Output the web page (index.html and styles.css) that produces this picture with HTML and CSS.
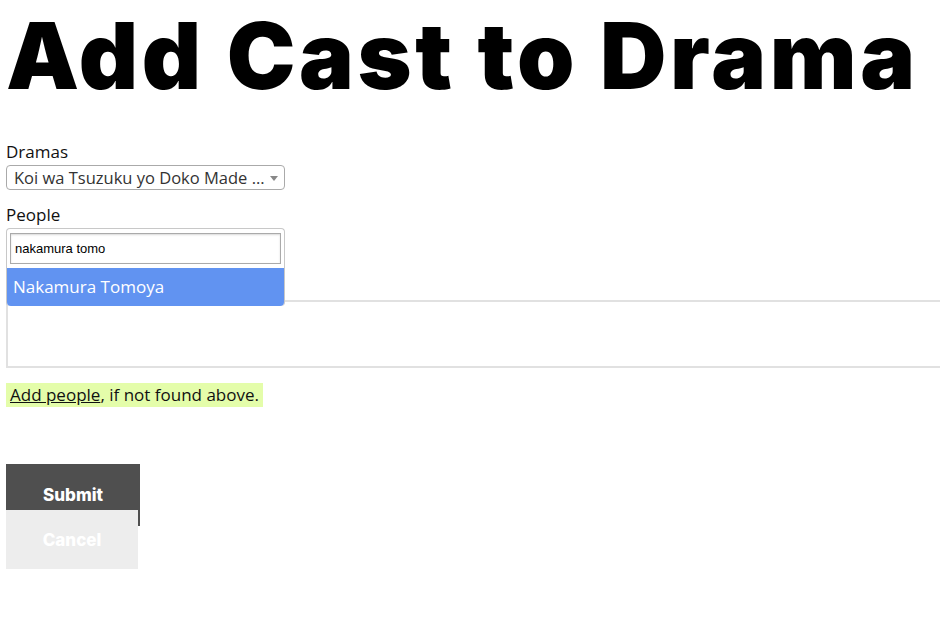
FILE: index.html
```html
<!DOCTYPE html>
<html lang="en">

<head>
    <meta charset="UTF-8" />
    <title>Add Cast to Drama</title>
    <link rel="stylesheet" href="styles.css">
</head>

<body>
    <h1 class="title">Add Cast to Drama</h1>

    <form class="cast-form">
        <div class="field">
            <label class="field-label">Dramas</label>
            <div class="select-box">
                <span class="select-text">Koi wa Tsuzuku yo Doko Made ...</span>
                <span class="select-arrow"></span>
            </div>
        </div>

        <div class="field field-people">
            <label class="field-label">People</label>
            <div class="picker">
                <div class="picker-box"></div>
                <!-- dropdown opened above the box -->
                <div class="dropdown">
                    <div class="dropdown-search">
                        <input type="text" class="search-input" value="nakamura tomo" />
                    </div>
                    <div class="dropdown-option">Nakamura Tomoya</div>
                </div>
            </div>
        </div>

        <p class="hint"><a href="#" class="hint-link">Add people</a>, if not found above.</p>

        <div class="actions">
            <button type="button" class="btn btn-submit">Submit</button>
            <button type="button" class="btn btn-cancel">Cancel</button>
        </div>
    </form>
</body>

</html>
```

FILE: styles.css
```css
* {
    box-sizing: border-box;
}

html {
    overflow-x: hidden;
}

body {
    margin: 0;
    padding: 0 6px;
    font-family: "Open Sans", "DejaVu Sans", sans-serif;
    color: #111;
}

.title {
    margin: 0;
    font-family: Inter, "Open Sans", sans-serif;
    font-weight: 900;
    font-size: 92px;
    line-height: 112px;
    letter-spacing: 3.6px;
    color: #000;
    white-space: nowrap;
}

.cast-form {
    padding-top: 30px;
}

.field {
    margin-bottom: 15px;
}

.field-label {
    display: block;
    font-size: 17px;
    line-height: 20px;
    margin-bottom: 3px;
}

/* single select */
.select-box {
    position: relative;
    width: 279px;
    height: 25px;
    border: 1px solid #aaa;
    border-radius: 4px;
    padding: 0 0 0 7px;
    display: flex;
    align-items: center;
}

.select-text {
    font-size: 16.5px;
    color: #333;
}

.select-arrow {
    position: absolute;
    right: 6px;
    top: 10px;
    border-left: 4px solid transparent;
    border-right: 4px solid transparent;
    border-top: 5px solid #888;
}

/* people picker */
.field-people {
    margin-bottom: 15px;
}

.picker {
    position: relative;
    padding-top: 72px;
}

.picker-box {
    width: 950px;
    height: 68px;
    border: 2px solid #e1e1e1;
}

.dropdown {
    position: absolute;
    left: 0;
    top: 0;
    width: 279px;
    background: #fff;
    border: 1px solid #c8c8c8;
    border-bottom: none;
    border-radius: 4px;
}

.dropdown-search {
    padding: 4px 3px;
}

.search-input {
    display: block;
    width: 100%;
    height: 31px;
    border: 1px solid #aaa;
    box-shadow: inset 0 1px 2px rgba(0, 0, 0, 0.15);
    padding: 0 4px;
    font-family: "Liberation Sans", Arial, sans-serif;
    font-size: 13px;
    color: #000;
    outline: none;
}

.dropdown-option {
    height: 38px;
    line-height: 38px;
    padding: 0 6px;
    background: #6193f1;
    color: #fff;
    font-size: 17px;
    border-radius: 0 0 4px 4px;
}

/* hint */
.hint {
    margin: 0;
    display: inline-block;
    background: #e4fdaa;
    padding: 0 4px;
    font-size: 17px;
    line-height: 24px;
}

.hint-link {
    color: #111;
    text-decoration: underline;
}

/* buttons */
.actions {
    margin-top: 57px;
    display: flex;
    flex-direction: column;
    align-items: flex-start;
}

.btn {
    border: none;
    font-family: Inter, "Open Sans", sans-serif;
    font-weight: 800;
    font-size: 17px;
    color: #fff;
    cursor: pointer;
}

.btn-submit {
    width: 134px;
    height: 62px;
    background: #4f4f4f;
}

.btn-cancel {
    width: 132px;
    height: 59px;
    margin-top: -16px;
    background: #ededed;
}
```
